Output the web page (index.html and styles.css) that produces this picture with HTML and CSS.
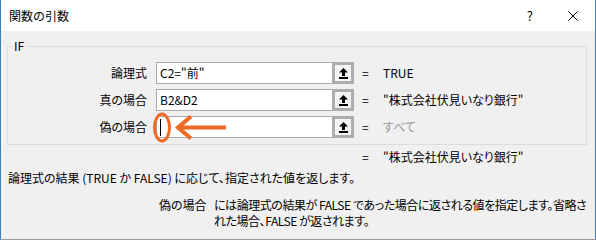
FILE: index.html
```html
<!DOCTYPE html>
<html lang="ja">
<head>
<meta charset="utf-8">
<title>関数の引数</title>
<link rel="stylesheet" href="styles.css">
</head>
<body>
<div class="window">
  <div class="titlebar">
    <span class="title">関数の引数</span>
    <span class="help">?</span>
    <span class="close"><svg width="10" height="10" viewBox="0 0 10 10"><path d="M0.5 0.5L9.5 9.5M9.5 0.5L0.5 9.5" stroke="#000" stroke-width="1" fill="none"/></svg></span>
  </div>
  <div class="body">
    <fieldset class="group">
      <legend>IF</legend>
      <div class="args">
        <label class="lbl">論理式</label>
        <div class="ref"><span class="field">C2="前"</span><span class="pick"><svg width="9" height="11" viewBox="0 0 9 11"><path d="M4.5 0L9 4.5H6V8H3V4.5H0Z" fill="#000"/><rect x="0" y="9" width="9" height="2" fill="#000"/></svg></span></div>
        <span class="eq">=</span>
        <span class="val">TRUE</span>

        <label class="lbl">真の場合</label>
        <div class="ref"><span class="field">B2&amp;D2</span><span class="pick"><svg width="9" height="11" viewBox="0 0 9 11"><path d="M4.5 0L9 4.5H6V8H3V4.5H0Z" fill="#000"/><rect x="0" y="9" width="9" height="2" fill="#000"/></svg></span></div>
        <span class="eq">=</span>
        <span class="val">"株式会社伏見いなり銀行"</span>

        <label class="lbl">偽の場合</label>
        <div class="ref"><span class="field"><span class="caret"></span></span><span class="pick"><svg width="9" height="11" viewBox="0 0 9 11"><path d="M4.5 0L9 4.5H6V8H3V4.5H0Z" fill="#000"/><rect x="0" y="9" width="9" height="2" fill="#000"/></svg></span></div>
        <span class="eq">=</span>
        <span class="val muted">すべて</span>
      </div>
    </fieldset>
    <div class="result"><span class="eq2">=</span><span>"株式会社伏見いなり銀行"</span></div>
    <p class="desc">論理式の結果 (TRUE か FALSE) に応じて、指定された値を返します。</p>
    <div class="param">
      <span class="pname">偽の場合</span>
      <span class="ptext">には論理式の結果が FALSE であった場合に返される値を指定します。省略さ<br>れた場合、FALSE が返されます。</span>
    </div>
  </div>
  <svg class="mark" width="90" height="44" viewBox="0 0 90 44">
    <ellipse cx="12" cy="19.5" rx="7.5" ry="13.5" fill="none" stroke="#ef6a25" stroke-width="3"/>
    <path d="M29 19.5H76" stroke="#ef6a25" stroke-width="4" fill="none"/>
    <path d="M41 8.5L28 19.5L41 30.5" stroke="#ef6a25" stroke-width="4" fill="none"/>
  </svg>
</div>
</body>
</html>
```
FILE: styles.css
```css
html, body {
  margin: 0;
  padding: 0;
  background: #f0f0f0;
}

body {
  font-family: "Noto Sans CJK JP", "Noto Sans", sans-serif;
  font-size: 12px;
  font-feature-settings: "palt";
  color: #000;
}

.window {
  position: relative;
  width: 596px;
  height: 240px;
  box-sizing: border-box;
  border-left: 1px solid #3d7ebf;
  border-right: 1px solid #3d7ebf;
  border-bottom: 1px solid #9a9a9a;
  background: #f0f0f0;
  overflow: hidden;
}

.titlebar {
  height: 31px;
  background: #fff;
  display: flex;
  align-items: center;
  padding: 0 17px 0 8px;
}

.title {
  flex: 1;
  line-height: 16px;
  padding-top: 1px;
  font-feature-settings: normal;
}

.help {
  font-size: 13px;
  line-height: 16px;
  margin-right: 35px;
}

.close {
  display: flex;
  width: 10px;
  height: 10px;
}

.group {
  margin: 8px 8px 0 6px;
  padding: 0 0 6px 0;
  border: 1px solid #dcdcdc;
  min-width: 0;
}

.group legend {
  margin-left: 4px;
  padding: 0 2px;
  line-height: 14px;
  font-size: 12px;
}

.args {
  margin-top: 9px;
  display: grid;
  grid-template-columns: 148px 198px 29px 1fr;
  grid-auto-rows: 22px;
  row-gap: 5px;
  align-items: center;
}

.lbl {
  text-align: right;
  padding-right: 9px;
  line-height: 16px;
}

.ref {
  display: flex;
  height: 22px;
}

.field {
  flex: 1;
  display: flex;
  align-items: center;
  background: #fff;
  border: 1px solid #ababab;
  border-right: none;
  padding-left: 3px;
  line-height: 16px;
}

.caret {
  display: block;
  width: 1px;
  height: 17px;
  background: #000;
}

.pick {
  width: 22px;
  box-sizing: border-box;
  border: 3px solid #adadad;
  background: #f4f4f4;
  display: flex;
  align-items: center;
  justify-content: center;
}

.eq {
  padding-left: 8px;
  line-height: 16px;
}

.val {
  line-height: 16px;
  white-space: nowrap;
}

.muted {
  color: #9a9a9a;
}

.result {
  margin-top: 4px;
  padding-left: 361px;
  display: flex;
  line-height: 16px;
}

.eq2 {
  width: 21px;
}

.desc {
  margin: 5px 0 0 7px;
  line-height: 16px;
}

.param {
  margin-top: 11px;
  padding-left: 158px;
  display: flex;
  line-height: 16px;
}

.pname {
  width: 55px;
  flex: none;
}

.ptext {
  width: 372px;
  letter-spacing: -0.45px;
  white-space: nowrap;
}

.mark {
  position: absolute;
  left: 149px;
  top: 108px;
}
```
